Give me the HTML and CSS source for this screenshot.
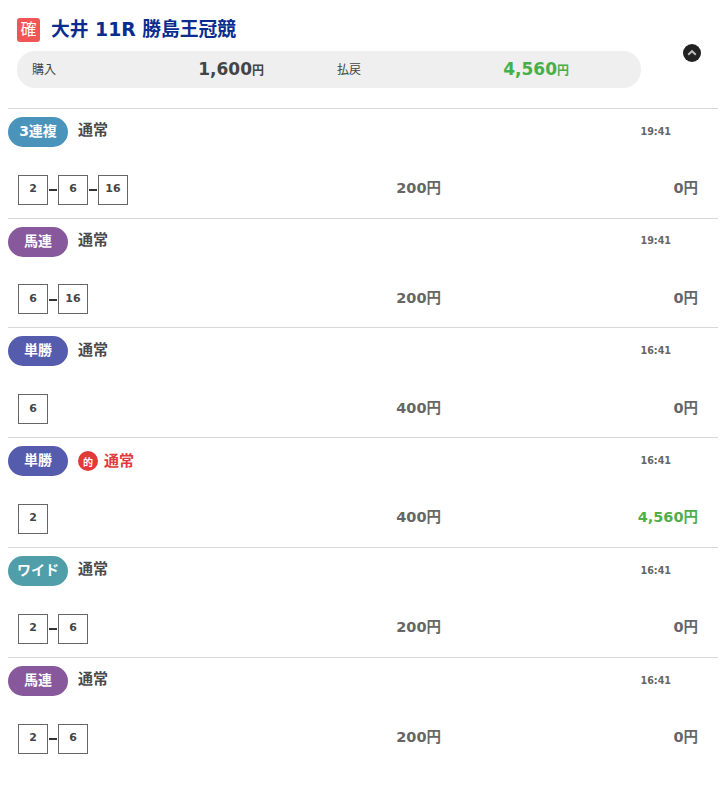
FILE: index.html
```html
<!DOCTYPE html>
<html lang="ja">
<head>
<meta charset="utf-8">
<title>投票履歴</title>
<link rel="stylesheet" href="styles.css">
</head>
<body>
<header class="summary">
  <div class="summary-main">
    <h1 class="title"><span class="status">確</span><span class="title-text">大井 11R 勝島王冠競</span></h1>
    <div class="totals">
      <div class="total"><span class="totals-label">購入</span><span class="totals-value">1,600<small>円</small></span></div>
      <div class="total"><span class="totals-label">払戻</span><span class="totals-value totals-win">4,560<small>円</small></span></div>
    </div>
  </div>
  <button class="toggle" aria-label="閉じる">
    <svg viewBox="0 0 18 18" width="18" height="18"><circle cx="9" cy="9" r="9" fill="#222"/><path d="M5.2 10.8 9 7.2l3.8 3.6" fill="none" stroke="#bbb" stroke-width="2"/></svg>
  </button>
</header>

<section class="bet">
  <div class="bet-top"><span class="pill sanrenpuku">3連複</span><span class="kind">通常</span><span class="time">19:41</span></div>
  <div class="bet-bottom">
    <div class="nums"><span class="num">2</span><span class="dash"></span><span class="num">6</span><span class="dash"></span><span class="num">16</span></div>
    <span class="stake">200円</span><span class="payout">0円</span>
  </div>
</section>
<section class="bet">
  <div class="bet-top"><span class="pill umaren">馬連</span><span class="kind">通常</span><span class="time">19:41</span></div>
  <div class="bet-bottom">
    <div class="nums"><span class="num">6</span><span class="dash"></span><span class="num">16</span></div>
    <span class="stake">200円</span><span class="payout">0円</span>
  </div>
</section>
<section class="bet">
  <div class="bet-top"><span class="pill tansho">単勝</span><span class="kind">通常</span><span class="time">16:41</span></div>
  <div class="bet-bottom">
    <div class="nums"><span class="num">6</span></div>
    <span class="stake">400円</span><span class="payout">0円</span>
  </div>
</section>
<section class="bet">
  <div class="bet-top"><span class="pill tansho">単勝</span><span class="hit">的</span><span class="kind kind-hit">通常</span><span class="time">16:41</span></div>
  <div class="bet-bottom">
    <div class="nums"><span class="num">2</span></div>
    <span class="stake">400円</span><span class="payout payout-win">4,560円</span>
  </div>
</section>
<section class="bet">
  <div class="bet-top"><span class="pill wide">ワイド</span><span class="kind">通常</span><span class="time">16:41</span></div>
  <div class="bet-bottom">
    <div class="nums"><span class="num">2</span><span class="dash"></span><span class="num">6</span></div>
    <span class="stake">200円</span><span class="payout">0円</span>
  </div>
</section>
<section class="bet">
  <div class="bet-top"><span class="pill umaren">馬連</span><span class="kind">通常</span><span class="time">16:41</span></div>
  <div class="bet-bottom">
    <div class="nums"><span class="num">2</span><span class="dash"></span><span class="num">6</span></div>
    <span class="stake">200円</span><span class="payout">0円</span>
  </div>
</section>
</body>
</html>
```

FILE: styles.css
```css
* { box-sizing: border-box; }
html, body { margin: 0; padding: 0; background: #fff; }
body {
  width: 710px;
  margin-left: 8px;
  padding-bottom: 20px;
  font-family: "DejaVu Sans", "Noto Sans CJK JP", sans-serif;
  color: #444;
}
.summary { display: flex; height: 107.8px; padding: 18px 0 0 9px; }
.summary-main { width: 624px; }
.title {
  display: flex;
  align-items: center;
  gap: 11px;
  height: 24px;
  margin: 0 0 9px;
  font-size: 18.8px;
  font-weight: 700;
  line-height: 24px;
  color: #0b2c8f;
}
.title-text { padding-bottom: 1px; }
.status {
  display: flex;
  align-items: center;
  justify-content: center;
  width: 23px;
  height: 24px;
  border-radius: 3px;
  background: #f05656;
  color: #fff;
  font-size: 16px;
  font-weight: 400;
}
.totals {
  display: flex;
  gap: 73px;
  height: 37px;
  padding: 0 0 2px 15px;
  border-radius: 18px;
  background: #efefef;
}
.total { display: flex; align-items: center; justify-content: space-between; width: 232px; }
.totals-label { font-size: 12px; color: #444; }
.totals-value { font-size: 17px; font-weight: 700; color: #444; }
.totals-value small { font-size: 12px; }
.totals-win { color: #45b04a; }
.toggle {
  width: 18px;
  height: 18px;
  margin: 26px 0 0 42px;
  padding: 0;
  border: 0;
  background: none;
  line-height: 0;
}
.bet {
  height: 109.8px;
  padding-top: 8px;
  border-top: 1px solid #d8d8d8;
}
.bet-top { display: flex; align-items: center; height: 30px; }
.pill {
  display: flex;
  align-items: center;
  justify-content: center;
  width: 60px;
  height: 30px;
  padding-bottom: 4px;
  border-radius: 15px;
  color: #fff;
  font-size: 14px;
  font-weight: 700;
}
.sanrenpuku { background: #4a94bc; }
.umaren { background: #88589c; }
.tansho { background: #555cae; }
.wide { background: #4f9ea9; }
.kind { margin: -6px 0 0 10px; font-size: 15px; font-weight: 700; color: #4a4a4a; }
.kind-hit { margin: -3px 0 0 6px; color: #e03a3a; }
.hit {
  display: flex;
  align-items: center;
  justify-content: center;
  width: 20px;
  height: 20px;
  margin-left: 10px;
  border-radius: 50%;
  background: #e03a3a;
  color: #fff;
  font-size: 10px;
  font-weight: 700;
}
.time { margin: -1.4px 0 0 auto; padding-right: 47px; font-size: 9.6px; font-weight: 700; color: #666; }
.bet-bottom { display: flex; align-items: center; height: 30px; margin-top: 27.8px; padding-left: 10px; }
.nums { display: flex; align-items: center; width: 200px; }
.num {
  display: flex;
  align-items: center;
  justify-content: center;
  width: 30px;
  height: 30px;
  padding-bottom: 2px;
  border: 1px solid #666;
  font-size: 11px;
  font-weight: 700;
  color: #444;
}
.dash { width: 8px; height: 2px; margin: 1px 1px 0; background: #333; }
.stake, .payout { margin-top: -6px; font-size: 14.5px; font-weight: 700; color: #666; text-align: right; }
.stake { width: 223px; }
.payout { width: 257px; }
.payout-win { color: #4fae4a; }
```
